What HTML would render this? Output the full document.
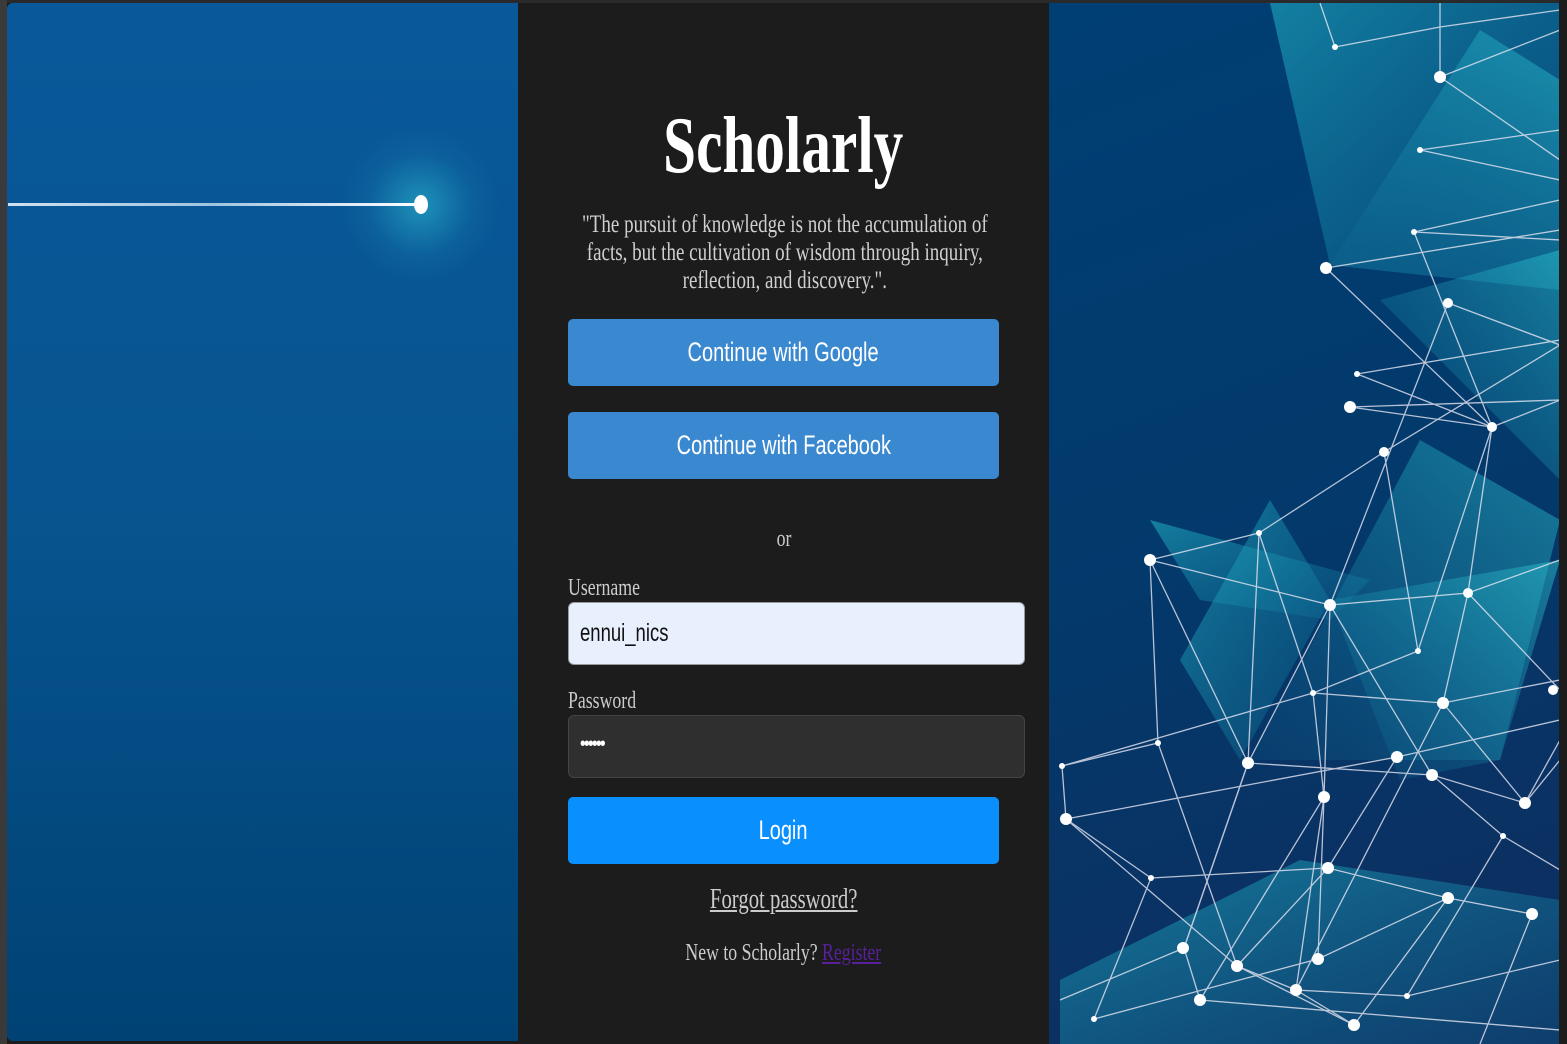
<!DOCTYPE html>
<html><head><meta charset="utf-8"><style>
html,body{margin:0;padding:0}
body{width:1567px;height:1044px;position:relative;overflow:hidden;background:#1c1c1c;font-family:"Liberation Serif",serif}
.a{position:absolute}
.c{display:inline-block;transform:scaleX(.74);transform-origin:center;white-space:nowrap}
.t{position:absolute;left:518px;width:531px;text-align:center}
.btn{position:absolute;left:568px;width:431px;height:67px;border-radius:5px;color:#fff;font-family:"Liberation Sans",sans-serif;font-size:27px;text-align:center;line-height:67px}
.inp{position:absolute;left:568px;width:455px;height:61px;border-radius:6px;border:1px solid #444}
.lbl{position:absolute;left:568px;color:#ccc;font-size:24px}
.lbl span{display:inline-block;transform:scaleX(.74);transform-origin:left}
</style></head><body>
<div class="a" style="left:0;top:0;width:1567px;height:3px;background:#2a2a2a"></div>
<div class="a" style="left:0;top:0;width:7px;height:1044px;background:#3a3a3a"></div>
<div class="a" style="left:7px;top:3px;width:511px;height:1038px;border-radius:6px 0 0 6px;background:linear-gradient(180deg,#09589a 0%,#07548f 50%,#004274 100%)"></div>
<div class="a" style="left:340px;top:125px;width:160px;height:160px;border-radius:50%;background:radial-gradient(circle,rgba(40,170,200,.7) 0%,rgba(20,120,170,.3) 45%,rgba(10,90,150,0) 70%)"></div>
<div class="a" style="left:8px;top:203px;width:410px;height:3px;background:linear-gradient(90deg,#cfe0f0,#9fc3e0 50%,#fff)"></div>
<div class="a" style="left:414px;top:195px;width:14px;height:19px;border-radius:50%;background:#fff"></div>

<div class="a" style="left:1049px;top:3px;width:510px;height:1041px;overflow:hidden;background:linear-gradient(160deg,#003f74 0%,#03396b 50%,#0f2d5e 100%)">
<svg width="510" height="1041" viewBox="1049 3 510 1041" style="position:absolute;left:0;top:0">
<defs>
<linearGradient id="g1" x1="0" y1="0" x2="1" y2="1"><stop offset="0" stop-color="#23b6c8" stop-opacity=".55"/><stop offset="1" stop-color="#0e6f9a" stop-opacity=".25"/></linearGradient>
<linearGradient id="g2" x1="1" y1="0" x2="0" y2="1"><stop offset="0" stop-color="#2cc4d0" stop-opacity=".5"/><stop offset="1" stop-color="#0e6f9a" stop-opacity=".15"/></linearGradient>
</defs>
<g>
<polygon fill="url(#g1)" points="1270,3 1330,265 1560,290 1560,3"/>
<polygon fill="url(#g2)" points="1330,265 1480,30 1560,80 1560,290"/>
<polygon fill="url(#g1)" points="1150,520 1370,580 1330,620 1200,600"/>
<polygon fill="url(#g2)" points="1250,760 1420,440 1560,520 1500,760"/>
<polygon fill="url(#g1)" points="1060,980 1300,860 1560,900 1560,1044 1060,1044"/>
<polygon fill="url(#g2)" points="1380,300 1560,250 1560,480"/>
<polygon fill="url(#g1)" points="1270,500 1330,600 1240,760 1180,660"/>
<polygon fill="url(#g2)" points="1330,600 1560,560 1500,760 1400,780"/>
</g>
<g stroke="#e6e6f2" stroke-width="1.3" fill="none" opacity=".8">
<polyline points="1320,3 1335,47 1440,27 1560,10"/>
<polyline points="1440,77 1560,30"/><polyline points="1440,77 1560,160"/><polyline points="1440,77 1440,3"/>
<polyline points="1420,150 1560,130"/><polyline points="1420,150 1560,180"/>
<polyline points="1414,232 1560,200"/><polyline points="1414,232 1560,240"/><polyline points="1414,232 1492,427"/>
<polyline points="1326,268 1560,230"/><polyline points="1326,268 1492,427"/>
<polyline points="1448,303 1560,345 1384,452 1259,533 1150,560 1330,605 1468,593 1560,560"/>
<polyline points="1448,303 1330,605"/>
<polyline points="1357,374 1560,340"/><polyline points="1357,374 1492,427 1560,400"/>
<polyline points="1350,407 1560,400"/><polyline points="1350,407 1492,427 1468,593 1560,690"/>
<polyline points="1384,452 1418,651 1492,427"/>
<polyline points="1150,560 1158,743 1062,766 1066,819 1151,878 1094,1019"/>
<polyline points="1150,560 1248,763 1259,533 1313,693"/>
<polyline points="1330,605 1248,763 1184,948 1200,1000"/>
<polyline points="1330,605 1324,797 1318,959"/>
<polyline points="1330,605 1432,775 1525,803 1560,760"/>
<polyline points="1066,819 1397,757 1560,720"/>
<polyline points="1062,766 1313,693 1443,703 1560,680"/>
<polyline points="1158,743 1237,966 1296,990 1443,703"/>
<polyline points="1248,763 1432,775 1503,836 1560,870"/>
<polyline points="1066,819 1237,966 1354,1025"/>
<polyline points="1151,878 1328,868 1448,898 1532,914"/>
<polyline points="1324,797 1296,990 1407,996 1560,960"/>
<polyline points="1248,763 1184,948 1060,1000"/>
<polyline points="1418,651 1313,693 1324,797 1200,1000"/>
<polyline points="1468,593 1443,703 1525,803 1560,740"/>
<polyline points="1397,757 1328,868 1237,966"/>
<polyline points="1448,898 1354,1025 1296,990"/>
<polyline points="1532,914 1480,1044"/><polyline points="1503,836 1407,996"/>
<polyline points="1094,1019 1318,959 1448,898"/>
<polyline points="1200,1000 1560,1030"/>
</g>
<g fill="#fff">
<circle cx="1335" cy="47" r="3"/><circle cx="1440" cy="77" r="6"/><circle cx="1420" cy="150" r="3"/><circle cx="1414" cy="232" r="3"/><circle cx="1326" cy="268" r="6"/><circle cx="1448" cy="303" r="5"/><circle cx="1357" cy="374" r="3"/><circle cx="1350" cy="407" r="6"/><circle cx="1492" cy="427" r="5"/><circle cx="1384" cy="452" r="5"/><circle cx="1259" cy="533" r="3"/><circle cx="1150" cy="560" r="6"/><circle cx="1330" cy="605" r="6"/><circle cx="1468" cy="593" r="5"/><circle cx="1418" cy="651" r="3"/><circle cx="1313" cy="693" r="3"/><circle cx="1443" cy="703" r="6"/><circle cx="1553" cy="690" r="5"/><circle cx="1158" cy="743" r="3"/><circle cx="1062" cy="766" r="3"/><circle cx="1248" cy="763" r="6"/><circle cx="1397" cy="757" r="6"/><circle cx="1432" cy="775" r="6"/><circle cx="1324" cy="797" r="6"/><circle cx="1525" cy="803" r="6"/><circle cx="1066" cy="819" r="6"/><circle cx="1503" cy="836" r="3"/><circle cx="1151" cy="878" r="3"/><circle cx="1328" cy="868" r="6"/><circle cx="1448" cy="898" r="6"/><circle cx="1532" cy="914" r="6"/><circle cx="1183" cy="948" r="6"/><circle cx="1237" cy="966" r="6"/><circle cx="1318" cy="959" r="6"/><circle cx="1296" cy="990" r="6"/><circle cx="1200" cy="1000" r="6"/><circle cx="1407" cy="996" r="3"/><circle cx="1094" cy="1019" r="3"/><circle cx="1354" cy="1025" r="6"/>
</g>
</svg>
</div>
<div class="a" style="left:1559px;top:0;width:8px;height:1044px;background:#1c1c1c"></div>

<div class="t" style="top:100px;font-size:80px;font-weight:bold;color:#fff;line-height:92px"><span class="c">Scholarly</span></div>
<div class="t" style="top:211px;font-size:25px;color:#cfcfcf;line-height:28px"><span class="c" style="transform:scaleX(.76)">"The pursuit of knowledge is not the accumulation of<br>facts, but the cultivation of wisdom through inquiry,<br>reflection, and discovery.".</span></div>
<div class="btn" style="top:319px;background:#3a88cf"><span class="c">Continue with Google</span></div>
<div class="btn" style="top:412px;background:#3a88cf"><span class="c">Continue with Facebook</span></div>
<div class="t" style="top:524px;font-size:24px;color:#ccc;line-height:30px"><span class="c">or</span></div>
<div class="lbl" style="top:575px"><span>Username</span></div>
<div class="inp" style="top:602px;background:#e8f0fe;border-color:#999"></div>
<div class="a" style="left:580px;top:619px;font-family:'Liberation Sans',sans-serif;font-size:25px;color:#111"><span style="display:inline-block;transform:scaleX(.74);transform-origin:left">ennui_nics</span></div>
<div class="lbl" style="top:688px"><span>Password</span></div>
<div class="inp" style="top:715px;background:#2f2f2f"></div>
<div class="a" style="left:580px;top:733px;font-family:'Liberation Sans',sans-serif;font-size:20px;color:#fff;letter-spacing:-2px"><span style="display:inline-block;transform:scaleX(.8);transform-origin:left">••••••</span></div>
<div class="btn" style="top:797px;background:#0a8fff"><span class="c">Login</span></div>
<div class="t" style="top:883px;font-size:28px;color:#ccc;line-height:34px"><span class="c" style="text-decoration:underline">Forgot password?</span></div>
<div class="t" style="top:938px;font-size:24px;color:#ccc;line-height:30px"><span class="c">New to Scholarly? <u style="color:#5a1f9a">Register</u></span></div>
</body></html>
